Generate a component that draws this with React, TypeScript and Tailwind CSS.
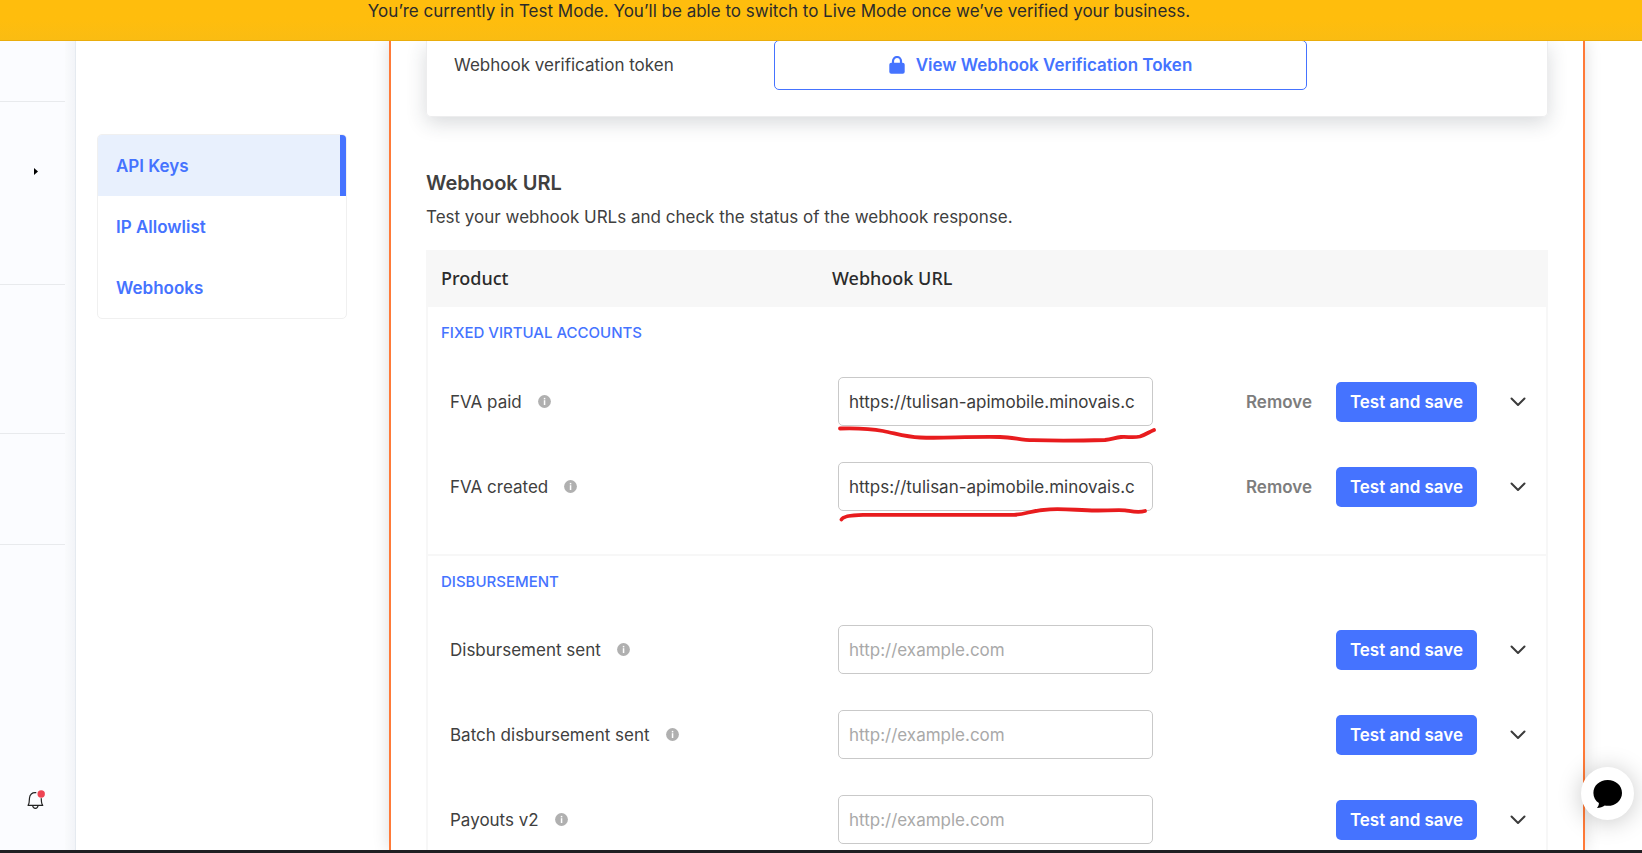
import { useState } from "react";
import type { ReactNode } from "react";

type WebhookRow = {
  id: string;
  label: string;
  url: string;
  mark?: string;
};

type WebhookGroup = {
  title: string;
  rows: WebhookRow[];
};

const navItems = ["API Keys", "IP Allowlist", "Webhooks"];

const groups: WebhookGroup[] = [
  {
    title: "FIXED VIRTUAL ACCOUNTS",
    rows: [
      {
        id: "fva-paid",
        label: "FVA paid",
        url: "https://tulisan-apimobile.minovais.c",
        mark: "M2 51.5 C20 51 32 51.5 45 54 C58 56.5 68 60 82 60.5 C105 61.5 125 59.5 162 60 C175 60 182 63 195 63.2 C220 64 250 63.5 267 63 C275 62 277 60.5 283 60 C290 59.5 295 61 302 59.5 C308 57.5 311 55 316 53",
      },
      {
        id: "fva-created",
        label: "FVA created",
        url: "https://tulisan-apimobile.minovais.c",
        mark: "M3.5 57.5 C5 54.5 14 53 25 52.8 C70 52.5 120 53 176 52.8 C188 52.5 194 48 212 47.3 C230 46.5 240 48.5 258 48.5 C268 48.5 278 48 287 48.3 C295 49.5 300 51 307 49",
      },
    ],
  },
  {
    title: "DISBURSEMENT",
    rows: [
      { id: "disbursement-sent", label: "Disbursement sent", url: "" },
      { id: "batch-disbursement-sent", label: "Batch disbursement sent", url: "" },
      { id: "payouts-v2", label: "Payouts v2", url: "" },
    ],
  },
];

function InfoIcon() {
  return (
    <svg className="h-[13px] w-[13px] shrink-0" viewBox="0 0 13 13" aria-hidden="true">
      <circle cx="6.5" cy="6.5" r="6.4" fill="#b0b0b0" />
      <rect x="5.8" y="5.2" width="1.5" height="4.8" fill="#fff" />
      <rect x="5.8" y="2.9" width="1.5" height="1.5" fill="#fff" />
    </svg>
  );
}

function LockIcon() {
  return (
    <svg className="h-[18px] w-4" viewBox="0 0 16 18" aria-hidden="true">
      <path d="M4 8V5a4 4 0 0 1 8 0v3" fill="none" stroke="#4573ff" strokeWidth="2.2" />
      <rect x="0.3" y="6.8" width="15.4" height="11" rx="2" fill="#4573ff" />
    </svg>
  );
}

function ChevronIcon() {
  return (
    <svg className="h-[10px] w-4" viewBox="0 0 16 10" fill="none" aria-hidden="true">
      <path d="M1.5 1.5 8 8l6.5-6.5" stroke="#3b3b3b" strokeWidth="2" strokeLinecap="round" strokeLinejoin="round" />
    </svg>
  );
}

function BellIcon() {
  return (
    <svg className="h-5 w-[18px]" viewBox="0 0 18 20" fill="none" aria-hidden="true">
      <path
        d="M8.8 2.7C5 2.4 2.7 4.5 2.5 8L2.1 12.5C2 13.5 1.6 14.3 1.1 15.4H15.7C15 14.3 14.7 13.5 14.5 12L14.2 8.5"
        stroke="#222"
        strokeWidth="1.2"
        strokeLinejoin="round"
        strokeLinecap="round"
      />
      <path d="M5.6 15.5c.3 1.9 1.4 2.9 2.8 2.9s2.4-1 2.7-2.9" stroke="#222" strokeWidth="1.2" />
      <circle cx="14.2" cy="4" r="3.7" fill="#ee4453" />
    </svg>
  );
}

function ChatIcon() {
  return (
    <svg className="h-7 w-[29px]" viewBox="0 0 29 28" aria-hidden="true">
      <path
        d="M14.7 0C22.8 0 29 5.6 29 12.9s-6.2 12.9-14.3 12.9c-1.1 0-2-.1-3-.3C9.6 27 7.2 28 4 28c1.2-1.3 1.9-3 1.9-4.9C2.4 20.8.4 17.2.4 12.9.4 5.6 6.6 0 14.7 0Z"
        fill="#000"
      />
    </svg>
  );
}

function Sidebar() {
  return (
    <aside className="flex w-[76px] shrink-0 border-r border-[#e5eaf0] bg-[#fbfcff]">
      <div className="flex w-[65px] flex-col">
        <div className="h-[61px] shrink-0 border-b border-[#e8eaed]" />
        <div className="h-[183px] shrink-0 border-b border-[#e8eaed] pt-[66px] pl-[34px]">
          <button type="button" aria-label="Expand menu" className="block">
            <svg className="h-[7px] w-1" viewBox="0 0 4 7" aria-hidden="true">
              <path d="M0 0 4 3.5 0 7Z" fill="#000" />
            </svg>
          </button>
        </div>
        <div className="h-[149px] shrink-0 border-b border-[#e8eaed]" />
        <div className="h-[111px] shrink-0 border-b border-[#e8eaed]" />
        <button type="button" aria-label="Notifications" className="mt-auto mb-10 ml-[27px] w-[18px]">
          <BellIcon />
        </button>
      </div>
      <div className="flex-1 bg-linear-to-r from-[#fafbfd] to-[#f2f4f8]" />
    </aside>
  );
}

function SettingsNav({ active, onSelect }: { active: string; onSelect: (item: string) => void }) {
  return (
    <nav className="w-[313px] shrink-0 pt-[93px] pl-[21px]">
      <ul className="w-[250px] overflow-hidden rounded-[5px] border border-[#f0f0f0]">
        {navItems.map((item) => (
          <li key={item}>
            <a
              href="#"
              onClick={() => onSelect(item)}
              className={
                item === active
                  ? "flex h-[61px] items-center border-r-6 border-[#4573ff] bg-[#e8f0fd] pl-[18px] font-semibold text-[#4573ff]"
                  : "flex h-[61px] items-center pl-[18px] font-semibold text-[#4573ff]"
              }
            >
              {item}
            </a>
          </li>
        ))}
      </ul>
    </nav>
  );
}

function HeaderCell({ children }: { children?: ReactNode }) {
  return (
    <th className="h-14 px-[13px] pb-1 text-left font-['Noto_Sans',sans-serif] text-lg leading-6 font-medium text-[#2b2b2b]">
      {children}
    </th>
  );
}

function WebhookTable() {
  return (
    <table className="mt-[21px] w-full table-fixed border-2 border-[#f7f7f7]">
      <colgroup>
        <col className="w-[35%]" />
        <col />
        <col className="w-[101px]" />
        <col className="w-[165px]" />
        <col className="w-[70px]" />
      </colgroup>
      <thead className="bg-[#f7f7f7]">
        <tr>
          <HeaderCell>Product</HeaderCell>
          <HeaderCell>Webhook URL</HeaderCell>
          <td colSpan={3} />
        </tr>
      </thead>
      {groups.map((group) => (
        <tbody key={group.title} className="border-b-2 border-[#f7f7f7]">
          <tr>
            <th colSpan={5} scope="rowgroup" className="h-[52px] px-[13px] text-left text-[15px] font-medium text-[#4573ff]">
              {group.title}
            </th>
          </tr>
          {group.rows.map((row) => (
            <tr key={row.id} className="h-[85px]">
              <td className="pl-[22px]">
                <div className="flex items-center gap-4">
                  <label htmlFor={row.id}>{row.label}</label>
                  <InfoIcon />
                </div>
              </td>
              <td className="pl-[19px]">
                <div className="relative w-[315px]">
                  <input
                    id={row.id}
                    type="url"
                    defaultValue={row.url}
                    placeholder="http://example.com"
                    className="block h-[49px] w-full rounded-[5px] border border-[#c9c9c9] bg-white px-[10px] text-[#3b3b3b] placeholder:text-[#a9a9a9]"
                  />
                  {row.mark && (
                    <svg className="pointer-events-none absolute top-0 left-0 h-[66px] w-[320px] overflow-visible" viewBox="0 0 320 66" aria-hidden="true">
                      <path d={row.mark} fill="none" stroke="#e81c1e" strokeWidth="3.8" strokeLinecap="round" strokeLinejoin="round" />
                    </svg>
                  )}
                </div>
              </td>
              <td className="text-right">
                {row.url && (
                  <button type="button" className="font-semibold text-[#7d7d7d]">
                    Remove
                  </button>
                )}
              </td>
              <td className="pl-6">
                <button type="button" className="h-10 w-[141px] rounded-[5px] bg-[#4573ff] font-semibold text-white">
                  Test and save
                </button>
              </td>
              <td>
                <button type="button" aria-label={`Show ${row.label} details`} className="mr-5 ml-auto block">
                  <ChevronIcon />
                </button>
              </td>
            </tr>
          ))}
          <tr>
            <td colSpan={5} className="h-[26px]" />
          </tr>
        </tbody>
      ))}
    </table>
  );
}

export default function App() {
  const [active, setActive] = useState("API Keys");

  return (
    <div className="flex h-screen flex-col overflow-hidden border-b-3 border-[#1f1f22] bg-white font-[Inter,sans-serif] text-[17px] leading-6 text-[#404040]">
      <header className="h-[41px] shrink-0 border-b border-[#eaad0c] bg-linear-to-b from-[#ffbd0d] from-50% to-[#fabc12] pr-[84px] text-center leading-[22px] text-[#2b2b2b]">
        You’re currently in Test Mode. You’ll be able to switch to Live Mode once we’ve verified your business.
      </header>

      <div className="flex min-h-0 flex-1 overflow-hidden">
        <Sidebar />
        <SettingsNav active={active} onSelect={setActive} />

        <main className="mr-[57px] min-w-0 flex-1 border-x-2 border-[#ff7a38] bg-white px-[35px] shadow-[0_0_16px_rgba(0,0,0,0.14)]">
          <section className="flex items-start rounded-b-[5px] border border-t-0 border-[#ededee] pb-[26px] pl-[27px] shadow-[0_6px_20px_rgba(40,50,60,0.18)]">
            <p className="w-80 shrink-0 pt-3">Webhook verification token</p>
            <button
              type="button"
              className="-mt-px flex h-[50px] w-[533px] items-center justify-center gap-[11px] rounded-[5px] border border-[#4573ff] font-semibold text-[#4573ff]"
            >
              <LockIcon />
              View Webhook Verification Token
            </button>
          </section>

          <h2 className="mt-[52px] text-xl leading-7 font-semibold">Webhook URL</h2>
          <p className="mt-2">Test your webhook URLs and check the status of the webhook response.</p>

          <WebhookTable />
        </main>
      </div>

      <button
        type="button"
        aria-label="Open chat"
        className="fixed right-2 bottom-[33px] flex h-[53px] w-[53px] items-center justify-center rounded-full bg-white shadow-[0_2px_24px_rgba(0,0,0,0.22)]"
      >
        <ChatIcon />
      </button>
    </div>
  );
}
